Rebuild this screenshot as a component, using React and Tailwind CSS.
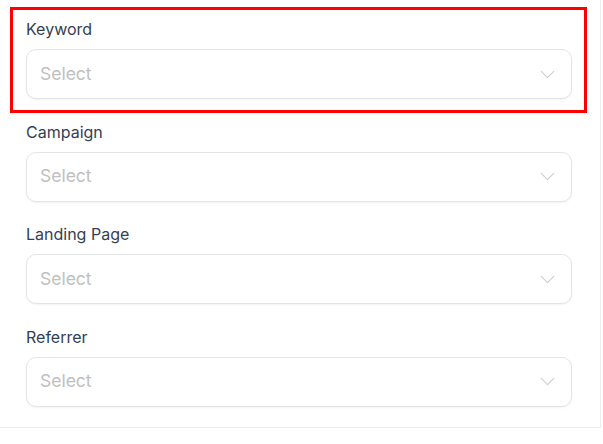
import { ChevronDown } from 'lucide-react';

const fields = ['Keyword', 'Campaign', 'Landing Page', 'Referrer'];

function SelectField({ label }) {
  return (
    <div className="flex flex-col">
      <label className="text-[16px] leading-6 text-[#344054] mb-2">{label}</label>
      <button
        type="button"
        className="h-[50px] w-full flex items-center justify-between pl-[13px] pr-[11px] rounded-[10px] border border-[#e4e4e7] bg-white shadow-[0_1px_2px_rgba(16,24,40,0.05)] text-left"
      >
        <span className="text-[17.5px] text-[#c0c0c0]">Select</span>
        <ChevronDown className="w-[25px] h-[25px] text-[#cfcfcf]" strokeWidth={1.1} absoluteStrokeWidth />
      </button>
    </div>
  );
}

export default function App() {
  return (
    <div className="w-[603px] h-[444px] bg-white" style={{ fontFamily: 'Inter, "Noto Sans", sans-serif' }}>
      <div className="relative w-[601px] border-r border-b border-[#ececf0] pl-[26px] pr-[28px] pt-[17px] pb-[20px] flex flex-col gap-[20.5px] mr-auto">
        {/* highlight around the first field */}
        <div className="absolute left-[10px] top-[7px] w-[577px] h-[106px] border-[3px] border-[#ff0000] pointer-events-none" />
        {fields.map((f) => (
          <SelectField key={f} label={f} />
        ))}
      </div>
    </div>
  );
}
